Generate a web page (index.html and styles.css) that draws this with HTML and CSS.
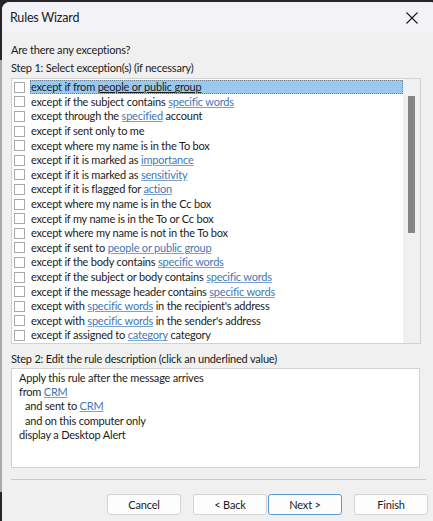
FILE: index.html
```html
<!DOCTYPE html>
<html>
<head>
<meta charset="utf-8">
<link rel="stylesheet" href="styles.css">
</head>
<body>
<div class="window">
  <div class="titlebar">
    <span class="title">Rules Wizard</span>
    <svg class="close" width="12" height="12" viewBox="0 0 12 12"><path d="M0.5 0.5 L11.5 11.5 M11.5 0.5 L0.5 11.5" stroke="#1a1a1a" stroke-width="1.1" fill="none"/></svg>
  </div>
  <div class="content">
    <div class="label">Are there any exceptions?</div>
    <div class="label">Step 1: Select exception(s) (if necessary)</div>
    <div class="listbox">
      <div class="list">
        <div class="row selected"><span class="cb"></span><span class="txt">except if from <u>people or public group</u></span></div>
        <div class="row"><span class="cb"></span><span class="txt">except if the subject contains <a>specific words</a></span></div>
        <div class="row"><span class="cb"></span><span class="txt">except through the <a>specified</a> account</span></div>
        <div class="row"><span class="cb"></span><span class="txt">except if sent only to me</span></div>
        <div class="row"><span class="cb"></span><span class="txt">except where my name is in the To box</span></div>
        <div class="row"><span class="cb"></span><span class="txt">except if it is marked as <a>importance</a></span></div>
        <div class="row"><span class="cb"></span><span class="txt">except if it is marked as <a>sensitivity</a></span></div>
        <div class="row"><span class="cb"></span><span class="txt">except if it is flagged for <a>action</a></span></div>
        <div class="row"><span class="cb"></span><span class="txt">except where my name is in the Cc box</span></div>
        <div class="row"><span class="cb"></span><span class="txt">except if my name is in the To or Cc box</span></div>
        <div class="row"><span class="cb"></span><span class="txt">except where my name is not in the To box</span></div>
        <div class="row"><span class="cb"></span><span class="txt">except if sent to <a>people or public group</a></span></div>
        <div class="row"><span class="cb"></span><span class="txt">except if the body contains <a>specific words</a></span></div>
        <div class="row"><span class="cb"></span><span class="txt">except if the subject or body contains <a>specific words</a></span></div>
        <div class="row"><span class="cb"></span><span class="txt">except if the message header contains <a>specific words</a></span></div>
        <div class="row"><span class="cb"></span><span class="txt">except with <a>specific words</a> in the recipient's address</span></div>
        <div class="row"><span class="cb"></span><span class="txt">except with <a>specific words</a> in the sender's address</span></div>
        <div class="row"><span class="cb"></span><span class="txt">except if assigned to <a>category</a> category</span></div>
      </div>
      <div class="scrollbar"><div class="thumb"></div></div>
    </div>
    <div class="label step2">Step 2: Edit the rule description (click an underlined value)</div>
    <div class="desc">
      <div>Apply this rule after the message arrives</div>
      <div>from <a>CRM</a></div>
      <div class="ind">and sent to <a>CRM</a></div>
      <div class="ind">and on this computer only</div>
      <div>display a Desktop Alert</div>
    </div>
    <div class="sep"></div>
    <div class="buttons">
      <button class="btn">Cancel</button>
      <div class="pair">
        <button class="btn">&lt; Back</button>
        <button class="btn default">Next &gt;</button>
      </div>
      <button class="btn">Finish</button>
    </div>
  </div>
</div>
</body>
</html>
```
FILE: styles.css
```css
html, body {
  margin: 0;
  padding: 0;
  height: 100%;
  overflow: hidden;
}
body {
  background: linear-gradient(to bottom, #262626 0, #262626 60px, #a8a8a8 60px, #a8a8a8 492px, #262626 492px);
  font-family: Lato, "Noto Sans", sans-serif;
  font-size: 11px;
  letter-spacing: -0.2px;
  color: #1b1b1b;
}
.window {
  margin: 2px 0 0 2px;
  width: 436px;
  height: 530px;
  background: #f0f0f0;
  border-radius: 8px 8px 0 0;
  overflow: hidden;
}
.titlebar {
  height: 31px;
  background: #f3f3f7;
  display: flex;
  align-items: center;
  justify-content: space-between;
  padding: 0 0 0 8px;
}
.title {
  font-size: 12.5px;
}
.close {
  margin-right: 20px;
  margin-top: 1px;
}
.content {
  padding: 9px 0 0 9px;
}
.label {
  height: 16px;
  line-height: 16px;
  margin-bottom: 2px;
}
.listbox {
  width: 408px;
  height: 264px;
  border: 1px solid #d2d2d2;
  display: flex;
  background: #f0f0f0;
}
.list {
  width: 391px;
  background: #fff;
  padding-top: 1px;
}
.row {
  height: 14.6px;
  display: flex;
  align-items: center;
  white-space: nowrap;
  overflow: hidden;
}
.cb {
  width: 9px;
  height: 9px;
  border: 1px solid #a9a9a9;
  background: #fff;
  margin: 0 6px 0 2px;
  flex: none;
}
.txt {
  line-height: 14px;
  padding: 0 1px;
  margin-left: -1px;
}
.row.selected .txt {
  flex: 1;
  background: #99c9ef;
  outline: 1px dotted #6f7f8f;
  outline-offset: -1px;
}
u {
  text-decoration: underline;
}
a {
  color: #3f77b5;
  text-decoration: underline;
  text-decoration-color: #7aa2cf;
}
.scrollbar {
  flex: 1;
  padding: 17px 0 0 5px;
}
.thumb {
  width: 7px;
  height: 137px;
  background: #858585;
}
.step2 {
  margin-top: 7px;
  margin-bottom: 0;
}
.desc {
  width: 400px;
  height: 92px;
  margin-top: 1px;
  border: 1px solid #d2d2d2;
  background: #fff;
  padding: 2px 0 4px 7px;
  line-height: 14.2px;
}
.desc .ind {
  padding-left: 6px;
}
.sep {
  width: 415px;
  height: 0;
  border-top: 1px solid #c8c8c8;
  margin-top: 11px;
}
.buttons {
  display: flex;
  width: 417px;
  justify-content: flex-end;
  gap: 12px;
  margin-top: 14px;
}
.pair {
  display: flex;
  gap: 1px;
}
.btn {
  width: 74px;
  height: 21px;
  border: 1px solid #d3d3d3;
  border-radius: 3px;
  background: #fdfdfd;
  font-family: Lato, "Noto Sans", sans-serif;
  font-size: 11px;
  letter-spacing: -0.2px;
  color: #1b1b1b;
  padding: 0;
  line-height: 18px;
}
.btn.default {
  border-color: #5b9bd5;
}
```
